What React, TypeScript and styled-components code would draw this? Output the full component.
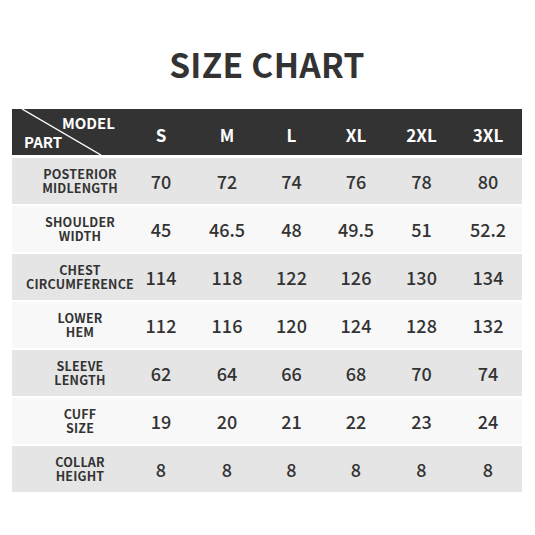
import styled, { createGlobalStyle } from "styled-components";

const GlobalStyle = createGlobalStyle`
  body {
    margin: 0;
    background: #ffffff;
    font-family: "Noto Sans CJK SC", "Noto Sans", sans-serif;
    color: #333333;
  }
`;

const Page = styled.div`
  width: 535px;
  height: 535px;
  padding: 0 13px 0 12px;
  box-sizing: border-box;
`;

const Title = styled.h1`
  margin: 0;
  padding-top: 40px;
  height: 109px;
  box-sizing: border-box;
  text-align: center;
  font-size: 33.5px;
  line-height: 48px;
  font-weight: 700;
  color: #333333;
  letter-spacing: 0.3px;
`;

const COLS = "116px 66px 66px 63px 66px 65px 68px";

const HeaderRow = styled.div`
  display: grid;
  grid-template-columns: ${COLS};
  height: 46px;
  margin-bottom: 3px;
  background: #333333;
  color: #ffffff;
`;

const Corner = styled.div`
  position: relative;
  display: flex;
  flex-direction: column;
  justify-content: center;
  font-size: 15px;
  font-weight: 700;
  line-height: 19px;
`;

const Diagonal = styled.svg`
  position: absolute;
  inset: 0;
`;

const CornerText = styled.span<{ $indent: number }>`
  position: relative;
  padding-left: ${({ $indent }) => $indent}px;
`;

const SizeHead = styled.div`
  display: flex;
  align-items: center;
  justify-content: center;
  padding-top: 4px;
  font-size: 17px;
  font-weight: 700;
`;

const Body = styled.div`
  display: flex;
  flex-direction: column;
  gap: 2px;
`;

const Row = styled.div<{ $shade: boolean }>`
  display: grid;
  grid-template-columns: ${COLS};
  height: 46px;
  background: ${({ $shade }) => ($shade ? "#e5e5e5" : "#f8f8f8")};
`;

const Label = styled.div`
  display: flex;
  align-items: center;
  justify-content: center;
  padding-left: 20px;
  white-space: pre-line;
  text-align: center;
  font-size: 12.5px;
  font-weight: 700;
  line-height: 14px;
  letter-spacing: 0.2px;
  overflow: visible;
`;

const Value = styled.div`
  display: flex;
  align-items: center;
  justify-content: center;
  font-size: 18px;
  font-weight: 500;
`;

const sizes = ["S", "M", "L", "XL", "2XL", "3XL"];

const rows: { label: string; values: string[] }[] = [
  { label: "POSTERIOR\nMIDLENGTH", values: ["70", "72", "74", "76", "78", "80"] },
  { label: "SHOULDER\nWIDTH", values: ["45", "46.5", "48", "49.5", "51", "52.2"] },
  { label: "CHEST\nCIRCUMFERENCE", values: ["114", "118", "122", "126", "130", "134"] },
  { label: "LOWER\nHEM", values: ["112", "116", "120", "124", "128", "132"] },
  { label: "SLEEVE\nLENGTH", values: ["62", "64", "66", "68", "70", "74"] },
  { label: "CUFF\nSIZE", values: ["19", "20", "21", "22", "23", "24"] },
  { label: "COLLAR\nHEIGHT", values: ["8", "8", "8", "8", "8", "8"] },
];

export default function App() {
  return (
    <Page>
      <GlobalStyle />
      <Title>SIZE CHART</Title>
      <HeaderRow>
        <Corner>
          <Diagonal width="116" height="46" viewBox="0 0 116 46">
            <line x1="10" y1="0" x2="89" y2="46" stroke="#ffffff" strokeWidth="1.4" />
          </Diagonal>
          <CornerText $indent={50}>MODEL</CornerText>
          <CornerText $indent={12}>PART</CornerText>
        </Corner>
        {sizes.map((s) => (
          <SizeHead key={s}>{s}</SizeHead>
        ))}
      </HeaderRow>
      <Body>
        {rows.map((r, i) => (
          <Row key={r.label} $shade={i % 2 === 0}>
            <Label>{r.label}</Label>
            {r.values.map((v, j) => (
              <Value key={j}>{v}</Value>
            ))}
          </Row>
        ))}
      </Body>
    </Page>
  );
}
